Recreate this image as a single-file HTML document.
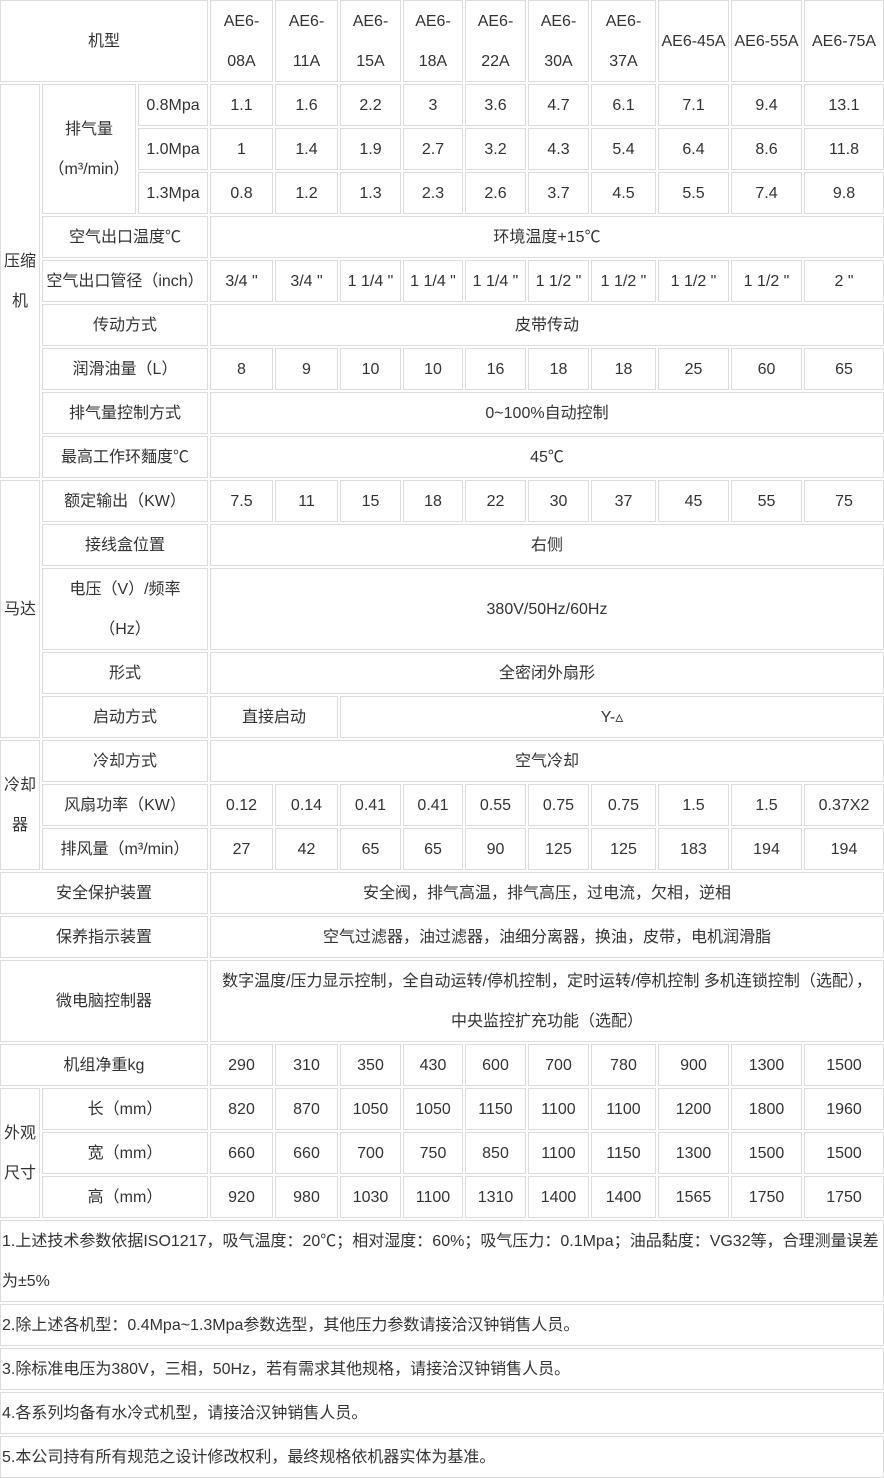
<!DOCTYPE html>
<html><head><meta charset="utf-8">
<style>
html,body{margin:0;padding:0;background:#fff;}
body{width:884px;height:1478px;overflow:hidden;}
.g{display:grid;grid-template-columns:40px 94px 70px 63px 63px 61px 60px 61px 61px 65px 71px 71px 80px;
grid-template-rows:82px repeat(3,42px) repeat(6,42px) 42px 42px 82px 42px 42px repeat(3,42px) 42px 42px 82px 42px repeat(3,42px) 82px repeat(4,42px);
gap:2px;font-family:"Liberation Sans","Noto Sans CJK SC",sans-serif;font-size:16px;color:#333;}
.g>div{border:1px solid #ddd;display:flex;align-items:center;justify-content:center;text-align:center;line-height:40px;white-space:nowrap;box-sizing:border-box;padding-top:2px;}
.g>div.l{justify-content:flex-start;text-align:left;padding-left:1px;}
.a{grid-column:4/14}
.lab{grid-column:2/4}
.full{grid-column:1/4}
.n{grid-column:1/14}
</style></head><body>
<div class="g">
<div class="full">机型</div>
<div>AE6-<br>08A</div><div>AE6-<br>11A</div><div>AE6-<br>15A</div><div>AE6-<br>18A</div><div>AE6-<br>22A</div><div>AE6-<br>30A</div><div>AE6-<br>37A</div><div>AE6-45A</div><div>AE6-55A</div><div>AE6-75A</div>

<div style="grid-row:span 9">压缩<br>机</div>
<div style="grid-row:span 3">排气量<br>（m³/min）</div>
<div>0.8Mpa</div><div>1.1</div><div>1.6</div><div>2.2</div><div>3</div><div>3.6</div><div>4.7</div><div>6.1</div><div>7.1</div><div>9.4</div><div>13.1</div>
<div>1.0Mpa</div><div>1</div><div>1.4</div><div>1.9</div><div>2.7</div><div>3.2</div><div>4.3</div><div>5.4</div><div>6.4</div><div>8.6</div><div>11.8</div>
<div>1.3Mpa</div><div>0.8</div><div>1.2</div><div>1.3</div><div>2.3</div><div>2.6</div><div>3.7</div><div>4.5</div><div>5.5</div><div>7.4</div><div>9.8</div>
<div class="lab">空气出口温度℃</div><div class="a">环境温度+15℃</div>
<div class="lab">空气出口管径（inch）</div><div>3/4 "</div><div>3/4 "</div><div>1 1/4 "</div><div>1 1/4 "</div><div>1 1/4 "</div><div>1 1/2 "</div><div>1 1/2 "</div><div>1 1/2 "</div><div>1 1/2 "</div><div>2 "</div>
<div class="lab">传动方式</div><div class="a">皮带传动</div>
<div class="lab">润滑油量（L）</div><div>8</div><div>9</div><div>10</div><div>10</div><div>16</div><div>18</div><div>18</div><div>25</div><div>60</div><div>65</div>
<div class="lab">排气量控制方式</div><div class="a">0~100%自动控制</div>
<div class="lab">最高工作环麵度℃</div><div class="a">45℃</div>

<div style="grid-row:span 5">马达</div>
<div class="lab">额定输出（KW）</div><div>7.5</div><div>11</div><div>15</div><div>18</div><div>22</div><div>30</div><div>37</div><div>45</div><div>55</div><div>75</div>
<div class="lab">接线盒位置</div><div class="a">右侧</div>
<div class="lab">电压（V）/频率<br>（Hz）</div><div class="a">380V/50Hz/60Hz</div>
<div class="lab">形式</div><div class="a">全密闭外扇形</div>
<div class="lab">启动方式</div><div style="grid-column:span 2">直接启动</div><div style="grid-column:span 8">Y-▵</div>

<div style="grid-row:span 3">冷却<br>器</div>
<div class="lab">冷却方式</div><div class="a">空气冷却</div>
<div class="lab">风扇功率（KW）</div><div>0.12</div><div>0.14</div><div>0.41</div><div>0.41</div><div>0.55</div><div>0.75</div><div>0.75</div><div>1.5</div><div>1.5</div><div>0.37X2</div>
<div class="lab">排风量（m³/min）</div><div>27</div><div>42</div><div>65</div><div>65</div><div>90</div><div>125</div><div>125</div><div>183</div><div>194</div><div>194</div>

<div class="full">安全保护装置</div><div class="a">安全阀，排气高温，排气高压，过电流，欠相，逆相</div>
<div class="full">保养指示装置</div><div class="a">空气过滤器，油过滤器，油细分离器，换油，皮带，电机润滑脂</div>
<div class="full">微电脑控制器</div><div class="a">数字温度/压力显示控制，全自动运转/停机控制，定时运转/停机控制 多机连锁控制（选配），<br>中央监控扩充功能（选配）</div>
<div class="full">机组净重kg</div><div>290</div><div>310</div><div>350</div><div>430</div><div>600</div><div>700</div><div>780</div><div>900</div><div>1300</div><div>1500</div>

<div style="grid-row:span 3">外观<br>尺寸</div>
<div class="lab">长（mm）</div><div>820</div><div>870</div><div>1050</div><div>1050</div><div>1150</div><div>1100</div><div>1100</div><div>1200</div><div>1800</div><div>1960</div>
<div class="lab">宽（mm）</div><div>660</div><div>660</div><div>700</div><div>750</div><div>850</div><div>1100</div><div>1150</div><div>1300</div><div>1500</div><div>1500</div>
<div class="lab">高（mm）</div><div>920</div><div>980</div><div>1030</div><div>1100</div><div>1310</div><div>1400</div><div>1400</div><div>1565</div><div>1750</div><div>1750</div>

<div class="n l">1.上述技术参数依据ISO1217，吸气温度：20℃；相对湿度：60%；吸气压力：0.1Mpa；油品黏度：VG32等，合理测量误差<br>为±5%</div>
<div class="n l">2.除上述各机型：0.4Mpa~1.3Mpa参数选型，其他压力参数请接洽汉钟销售人员。</div>
<div class="n l">3.除标准电压为380V，三相，50Hz，若有需求其他规格，请接洽汉钟销售人员。</div>
<div class="n l">4.各系列均备有水冷式机型，请接洽汉钟销售人员。</div>
<div class="n l">5.本公司持有所有规范之设计修改权利，最终规格依机器实体为基准。</div>
</div>
</body></html>
